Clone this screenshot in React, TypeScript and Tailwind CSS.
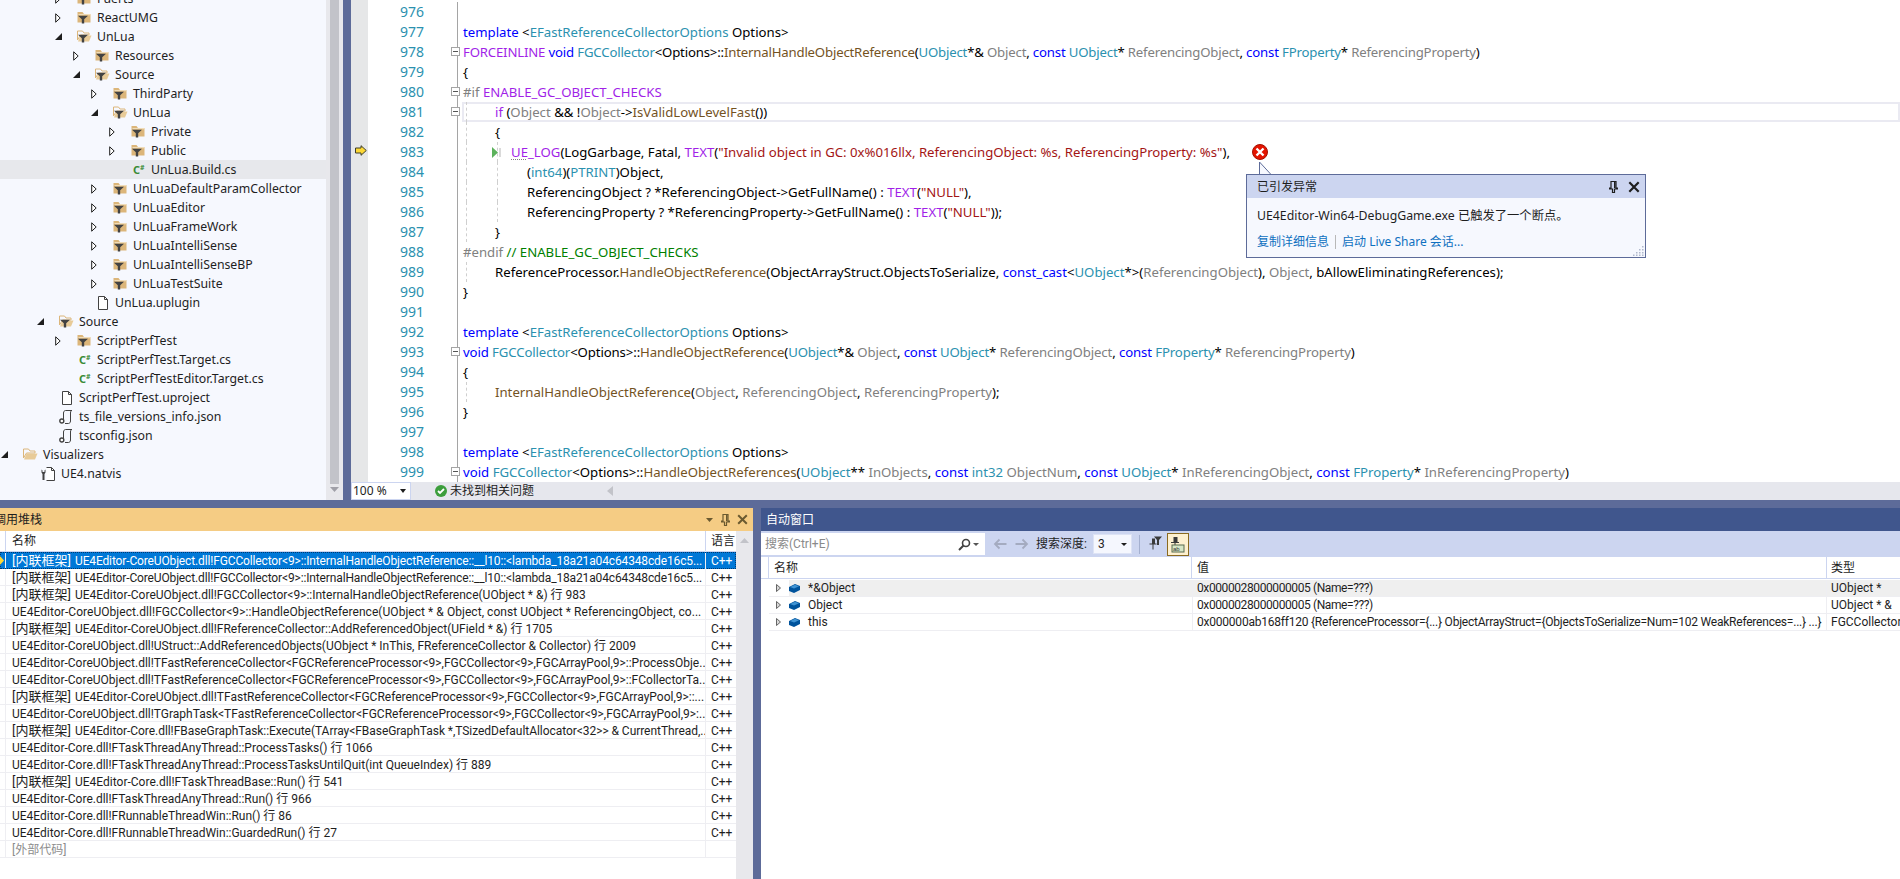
import { ReactNode } from "react";

const UI_FONT = "font-['Noto_Sans','Noto_Sans_CJK_SC',sans-serif]";
const LIST_FONT = "font-['Roboto','Noto_Sans_CJK_SC',sans-serif]";

// ---------- small icons ----------
const FolderClosed = () => (
  <svg width="14" height="13" viewBox="0 0 14 13">
    <path d="M0.5 1h5l1.5 2h6.5v8.5h-13z" fill="#dcb67a" />
    <path d="M1.5 3.2h12v1h-12z" fill="#f5e6c8" />
    <path d="M1 4.8h10l-3.8 3.4v4.3h-2.4v-4.3z" fill="#424242" />
  </svg>
);

const FolderOpen = ({ filter = true }: { filter?: boolean }) => (
  <svg width="15" height="13" viewBox="0 0 15 13">
    <path d="M0.5 1h5l1.5 2h5v2H3.5l-3 5z" fill="none" stroke="#dcb67a" />
    <path d="M3.5 5.5h11l-2.5 6h-11z" fill="#e8cb98" />
    {filter && <path d="M1 4.8h10l-3.8 3.4v4.3h-2.4v-4.3z" fill="#424242" />}
  </svg>
);

const FileIcon = () => (
  <svg className="ml-[2px]" width="12" height="14" viewBox="0 0 12 14">
    <path d="M1.5 0.5h6l3 3v10h-9z" fill="#fff" stroke="#424242" />
    <path d="M7.5 0.5v3h3" fill="none" stroke="#424242" />
  </svg>
);

const JsonIcon = () => (
  <svg width="14" height="14" viewBox="0 0 14 14">
    <path d="M4.5 10V3c0-1.5 1-2.5 2-2.5h6.500c-1 0-1.500 1-1.500 2.500v8c0 1.500-1 2.500-2 2.500H6" fill="none" stroke="#424242" />
    <circle cx="2.800" cy="11" r="2" fill="#fff" stroke="#424242" strokeWidth="1.400" />
  </svg>
);

const NatvisIcon = () => (
  <svg width="14" height="14" viewBox="0 0 14 14">
    <path d="M5.500 0.500h5l3 3v10H5.500" fill="#fff" stroke="#424242" />
    <path d="M10.500 0.500v3h3" fill="none" stroke="#424242" />
    <path d="M0.500 2.500v3l1 1.500v6h2V7l1-1.500v-3l-1 1v1.500h-2V3.500z" fill="#424242" />
  </svg>
);

const Collapsed = () => (
  <svg width="6" height="10" viewBox="0 0 6 10">
    <path d="M0.700 0.800l4.500 4.200-4.500 4.200z" fill="#fff" stroke="#1e1e1e" />
  </svg>
);

const Expanded = () => (
  <svg width="7" height="7" viewBox="0 0 7 7">
    <path d="M7 0v7H0z" fill="#1e1e1e" />
  </svg>
);

const CSharp = () => (
  <span className="ml-[2px] flex items-start w-[13px] font-bold leading-none text-[#388a34]">
    <span className="text-[11px]">C</span>
    <span className="text-[7px]">#</span>
  </span>
);

const Cube = () => (
  <svg width="11" height="9" viewBox="0 0 11 9">
    <path d="M0 3l6-3 5 2v4l-6 3-5-2z" fill="#00539c" />
    <path d="M1 3l5-2.300 4 1.600-5 2.200z" fill="#3f93d3" />
  </svg>
);

const SmallTri = () => (
  <svg width="5" height="8" viewBox="0 0 5 8">
    <path d="M0.500 0.500l4 3.500-4 3.500z" fill="#d8d8d8" stroke="#444" strokeWidth="0.800" />
  </svg>
);

const Pin = ({ color = "#1e1e1e" }: { color?: string }) => (
  <svg width="9" height="12" viewBox="0 0 9 12">
    <path d="M2 0.500h5v6.500h1.500v1h-3v3.500h-2V8h-3V7H2z" fill="none" stroke={color} strokeWidth="1.200" />
    <path d="M5 1v6h1.500V1z" fill={color} />
  </svg>
);

const Cross = ({ color = "#1e1e1e", size = 11 }: { color?: string; size?: number }) => (
  <svg width={size} height={size} viewBox="0 0 11 11">
    <path d="M1.200 1.200l8.600 8.600M9.800 1.200l-8.600 8.600" stroke={color} strokeWidth="2" />
  </svg>
);

const ExecArrow = () => (
  <svg width="12" height="11" viewBox="0 0 12 11">
    <path d="M0.500 3h5.500V0.700l5.300 4.800L6 10.300V8H0.500z" fill="#fdd835" stroke="#3f3f2a" />
  </svg>
);

// ---------- solution tree ----------
type Kind = "fc" | "fo" | "fr" | "cs" | "file" | "json" | "nat";
const tree: [number, string, Kind, "c" | "e" | ""][] = [
  [1, "Fuerts", "fc", "c"],
  [1, "ReactUMG", "fc", "c"],
  [1, "UnLua", "fo", "e"],
  [2, "Resources", "fc", "c"],
  [2, "Source", "fo", "e"],
  [3, "ThirdParty", "fc", "c"],
  [3, "UnLua", "fo", "e"],
  [4, "Private", "fc", "c"],
  [4, "Public", "fc", "c"],
  [4, "UnLua.Build.cs", "cs", ""],
  [3, "UnLuaDefaultParamCollector", "fc", "c"],
  [3, "UnLuaEditor", "fc", "c"],
  [3, "UnLuaFrameWork", "fc", "c"],
  [3, "UnLuaIntelliSense", "fc", "c"],
  [3, "UnLuaIntelliSenseBP", "fc", "c"],
  [3, "UnLuaTestSuite", "fc", "c"],
  [2, "UnLua.uplugin", "file", ""],
  [0, "Source", "fo", "e"],
  [1, "ScriptPerfTest", "fc", "c"],
  [1, "ScriptPerfTest.Target.cs", "cs", ""],
  [1, "ScriptPerfTestEditor.Target.cs", "cs", ""],
  [0, "ScriptPerfTest.uproject", "file", ""],
  [0, "ts_file_versions_info.json", "json", ""],
  [0, "tsconfig.json", "json", ""],
  [-1, "Visualizers", "fr", "e"],
  [-2, "UE4.natvis", "nat", ""],
];

const indentClass: Record<number, string> = {
  [-2]: "pl-[19px]",
  [-1]: "pl-[1px]",
  0: "pl-[37px]",
  1: "pl-[55px]",
  2: "pl-[73px]",
  3: "pl-[91px]",
  4: "pl-[109px]",
};

const kindIcon = (k: Kind) => {
  if (k === "fc") return <FolderClosed />;
  if (k === "fo") return <FolderOpen />;
  if (k === "fr") return <FolderOpen filter={false} />;
  if (k === "cs") return <CSharp />;
  if (k === "file") return <FileIcon />;
  if (k === "json") return <JsonIcon />;
  return <NatvisIcon />;
};

const SolutionTree = () => (
  <div className="flex w-[343px] h-full bg-[#f6f8fe]">
    <div className="w-[326px] -mt-[11px] overflow-hidden">
      {tree.map(([lvl, name, kind, exp], i) => (
        <div
          key={i}
          className={`flex items-center h-[19px] text-[12.3px] text-[#1e1e1e] ${indentClass[lvl]} ${
            i === 9 ? "bg-[#e7e8ec]" : ""
          }`}
        >
          <span className="w-[22px] flex-none flex items-center">
            {exp === "c" && <Collapsed />}
            {exp === "e" && <Expanded />}
          </span>
          <span className="w-[20px] flex-none flex items-center">{kindIcon(kind)}</span>
          <span className="whitespace-nowrap pt-[2px]">{name}</span>
        </div>
      ))}
    </div>
    <div className="w-[17px] bg-[#e8e8ec] flex flex-col items-center">
      <div className="w-[9px] h-[484px] bg-[#c2c3c9]" />
      <svg className="mt-[3px]" width="9" height="5" viewBox="0 0 9 5">
        <path d="M0 0h9L4.500 5z" fill="#a0a0a8" />
      </svg>
    </div>
  </div>
);

// ---------- code editor ----------
const color: Record<string, string> = {
  k: "text-[#0000ff]",
  t: "text-[#2b91af]",
  m: "text-[#a11fe8]",
  f: "text-[#74531f]",
  p: "text-[#808080]",
  s: "text-[#a31515]",
  c: "text-[#008000]",
  o: "text-[#000000]",
};

type Tok = [string, string];
const T = (s: string, k = "o"): Tok => [s, k];
const templ: Tok[] = [T("template", "k"), T(" <"), T("EFastReferenceCollectorOptions", "t"), T(" Options>")];
const refs: Tok[] = [
  T("UObject", "t"),
  T("*& "),
  T("Object", "p"),
  T(", "),
  T("const ", "k"),
  T("UObject", "t"),
  T("* "),
  T("ReferencingObject", "p"),
  T(", "),
  T("const ", "k"),
  T("FProperty", "t"),
  T("* "),
  T("ReferencingProperty", "p"),
  T(")"),
];

const L1 = "pl-[37px]";
const L2 = "pl-[53px]";
const L3 = "pl-[69px]";

const code: { n: number; ind?: string; toks: Tok[]; fold?: boolean; g1?: boolean; g2?: boolean; tight?: string }[] = [
  { n: 976, toks: [] },
  { n: 977, toks: templ },
  {
    n: 978,
    fold: true,
    tight: "tracking-[-0.18px]",
    toks: [
      T("FORCEINLINE ", "m"),
      T("void ", "k"),
      T("FGCCollector", "t"),
      T("<Options>::"),
      T("InternalHandleObjectReference", "f"),
      T("("),
      ...refs,
    ],
  },
  { n: 979, toks: [T("{")] },
  { n: 980, fold: true, toks: [T("#if ", "p"), T("ENABLE_GC_OBJECT_CHECKS", "m")] },
  {
    n: 981,
    fold: true,
    g1: true,
    ind: L1,
    toks: [
      T("if ", "m"),
      T("("),
      T("Object ", "p"),
      T("&& !"),
      T("Object", "p"),
      T("->"),
      T("IsValidLowLevelFast", "f"),
      T("())"),
    ],
  },
  { n: 982, g1: true, ind: L1, toks: [T("{")] },
  {
    n: 983,
    g1: true,
    g2: true,
    ind: L2,
    toks: [
      T("UE_LOG", "m"),
      T("(LogGarbage, Fatal, "),
      T("TEXT", "m"),
      T("("),
      T('"Invalid object in GC: 0x%016llx, ReferencingObject: %s, ReferencingProperty: %s"', "s"),
      T("),"),
    ],
  },
  {
    n: 984,
    g1: true,
    g2: true,
    ind: L3,
    toks: [T("("), T("int64", "t"), T(")("), T("PTRINT", "t"), T(")Object,")],
  },
  {
    n: 985,
    g1: true,
    g2: true,
    ind: L3,
    toks: [
      T("ReferencingObject ? *ReferencingObject->GetFullName() : "),
      T("TEXT", "m"),
      T("("),
      T('"NULL"', "s"),
      T("),"),
    ],
  },
  {
    n: 986,
    g1: true,
    g2: true,
    ind: L3,
    toks: [
      T("ReferencingProperty ? *ReferencingProperty->GetFullName() : "),
      T("TEXT", "m"),
      T("("),
      T('"NULL"', "s"),
      T("));"),
    ],
  },
  { n: 987, g1: true, ind: L1, toks: [T("}")] },
  { n: 988, toks: [T("#endif ", "p"), T("// ENABLE_GC_OBJECT_CHECKS", "c")] },
  {
    n: 989,
    g1: true,
    ind: L1,
    toks: [
      T("ReferenceProcessor."),
      T("HandleObjectReference", "f"),
      T("(ObjectArrayStruct.ObjectsToSerialize, "),
      T("const_cast", "k"),
      T("<"),
      T("UObject", "t"),
      T("*>("),
      T("ReferencingObject", "p"),
      T("), "),
      T("Object", "p"),
      T(", bAllowEliminatingReferences);"),
    ],
  },
  { n: 990, toks: [T("}")] },
  { n: 991, toks: [] },
  { n: 992, toks: templ },
  {
    n: 993,
    fold: true,
    tight: "tracking-[-0.12px]",
    toks: [
      T("void ", "k"),
      T("FGCCollector", "t"),
      T("<Options>::"),
      T("HandleObjectReference", "f"),
      T("("),
      ...refs,
    ],
  },
  { n: 994, toks: [T("{")] },
  {
    n: 995,
    g1: true,
    ind: L1,
    toks: [
      T("InternalHandleObjectReference", "f"),
      T("("),
      T("Object", "p"),
      T(", "),
      T("ReferencingObject", "p"),
      T(", "),
      T("ReferencingProperty", "p"),
      T(");"),
    ],
  },
  { n: 996, toks: [T("}")] },
  { n: 997, toks: [] },
  { n: 998, toks: templ },
  {
    n: 999,
    fold: true,
    toks: [
      T("void ", "k"),
      T("FGCCollector", "t"),
      T("<Options>::"),
      T("HandleObjectReferences", "f"),
      T("("),
      T("UObject", "t"),
      T("** "),
      T("InObjects", "p"),
      T(", "),
      T("const ", "k"),
      T("int32 ", "t"),
      T("ObjectNum", "p"),
      T(", "),
      T("const ", "k"),
      T("UObject", "t"),
      T("* "),
      T("InReferencingObject", "p"),
      T(", "),
      T("const ", "k"),
      T("FProperty", "t"),
      T("* "),
      T("InReferencingProperty", "p"),
      T(")"),
    ],
  },
];

const FoldBox = () => (
  <span className="absolute right-[-3px] top-[5px] w-[9px] h-[9px] border border-[#a5a5a5] bg-white flex items-center justify-center">
    <span className="w-[5px] h-px bg-[#555]" />
  </span>
);

const CodeRow = ({ row }: { row: (typeof code)[number] }) => (
  <div className="flex h-[20px] items-center">
    <span className="w-[56px] pb-px text-right text-[#2b91af] text-[14px] flex-none">{row.n}</span>
    <span className="relative w-[34px] h-full flex-none border-r border-[#a5a5a5]">{row.fold && <FoldBox />}</span>
    <div
      className={`relative flex-1 h-full flex items-center pt-[2px] whitespace-nowrap text-[13.2px] ${
        row.ind ?? "pl-[5px]"
      } ${row.tight ?? ""}`}
    >
      {row.n === 981 && <span className="absolute left-[4px] right-0 top-0 bottom-0 border-2 border-[#eaeaf2]" />}
      {row.g1 && <span className="absolute left-[8px] top-0 h-full border-l border-dashed border-[#cfcfcf]" />}
      {row.g2 && <span className="absolute left-[39px] top-0 h-full border-l border-dashed border-[#cfcfcf]" />}
      {row.n === 983 && (
        <>
          <svg className="absolute left-[34px] top-[5px]" width="9" height="11" viewBox="0 0 9 11">
            <path d="M0 0l6 5.500L0 11z" fill="#5cb25c" />
            <path d="M8 1v9" stroke="#b5b5b5" />
          </svg>
          <span className="absolute left-[53px] top-[17px] w-[15px] border-b border-dotted border-[#808080]" />
        </>
      )}
      {row.toks.map(([text, k], i) => (
        <span key={i} className={`relative whitespace-pre ${color[k]}`}>
          {text}
        </span>
      ))}
    </div>
  </div>
);

const ExceptionPopup = () => (
  <>
    <span className="absolute left-[884px] top-[144px] w-[16px] h-[16px] rounded-full bg-[#e41400] border border-[#a51000] flex items-center justify-center">
      <svg width="10" height="10" viewBox="0 0 10 10">
        <path d="M1.500 1.500l7 7M8.500 1.500l-7 7" stroke="#fff" strokeWidth="2.400" />
      </svg>
    </span>
    <svg className="absolute left-[891px] top-[161px]" width="14" height="14" viewBox="0 0 14 14">
      <path d="M0.500 14V1l12 13z" fill="#f6f8fe" stroke="#5d6b99" />
    </svg>
    <div className="absolute left-[878px] top-[174px] w-[400px] h-[84px] border border-[#5d6b99] bg-[#f6f8fe] text-[12px]">
      <div className="flex items-center h-[23px] pl-[10px] pr-[5px] bg-[#ccd5f0] text-[#1e1e1e]">
        <span className="flex-1">已引发异常</span>
        <span className="mr-[10px] flex items-center">
          <Pin />
        </span>
        <Cross size={12} />
      </div>
      <div className="pl-[10px] pt-[9px] h-[29px] text-[12.300px] text-[#1e1e1e] whitespace-nowrap">
        UE4Editor-Win64-DebugGame.exe 已触发了一个断点。
      </div>
      <div className="flex items-center pl-[10px] mt-[6px] text-[#0e70c0] whitespace-nowrap">
        <span>复制详细信息</span>
        <span className="w-px h-[14px] bg-[#b8b8b8] mx-[6px]" />
        <span>启动 Live Share 会话...</span>
      </div>
      <svg className="absolute right-px bottom-px" width="11" height="11" viewBox="0 0 11 11" fill="#b0b8cc">
        <rect x="9" y="1" width="1.500" height="1.500" />
        <rect x="6" y="4" width="1.500" height="1.500" />
        <rect x="9" y="4" width="1.500" height="1.500" />
        <rect x="3" y="7" width="1.500" height="1.500" />
        <rect x="6" y="7" width="1.500" height="1.500" />
        <rect x="9" y="7" width="1.500" height="1.500" />
        <rect x="0" y="9.500" width="1.500" height="1.500" />
        <rect x="3" y="9.500" width="1.500" height="1.500" />
        <rect x="6" y="9.500" width="1.500" height="1.500" />
        <rect x="9" y="9.500" width="1.500" height="1.500" />
      </svg>
    </div>
  </>
);

const Editor = () => (
  <div className="flex-1 flex flex-col min-w-0">
    <div className="flex-1 flex min-h-0">
      <div className="w-[17px] flex-none bg-[#e6e7e8] pt-[145px] pl-[4px]">
        <ExecArrow />
      </div>
      <div className="relative flex-1 bg-white pt-[2px] overflow-hidden font-['Noto_Sans','Noto_Sans_CJK_SC',sans-serif]">
        {code.map((row) => (
          <CodeRow key={row.n} row={row} />
        ))}
        <ExceptionPopup />
      </div>
    </div>
    <div className="flex items-center h-[18px] bg-[#e6e7ed] text-[12px] text-[#1e1e1e]">
      <div className="flex items-center justify-between w-[60px] h-full bg-white border border-[#ccd5f0] pl-[1px] pr-[4px]">
        <span>100 %</span>
        <svg width="6" height="4" viewBox="0 0 6 4">
          <path d="M0 0h6L3 4z" fill="#1e1e1e" />
        </svg>
      </div>
      <svg className="ml-[24px] mr-[3px]" width="12" height="12" viewBox="0 0 12 12">
        <circle cx="6" cy="6" r="6" fill="#3c9e3c" />
        <path d="M3 6l2 2 4-4" fill="none" stroke="#fff" strokeWidth="1.800" />
      </svg>
      <span>未找到相关问题</span>
      <svg className="ml-[73px]" width="6" height="10" viewBox="0 0 6 10">
        <path d="M6 0v10L0 5z" fill="#c2c3c9" />
      </svg>
    </div>
  </div>
);

// ---------- call stack ----------
// [inline frame?, text, letter spacing]
const stack: [boolean, string, string][] = [
  [true, "UE4Editor-CoreUObject.dll!FGCCollector<9>::InternalHandleObjectReference::__l10::<lambda_18a21a04c64348cde16c5...", "tracking-[-0.14px]"],
  [true, "UE4Editor-CoreUObject.dll!FGCCollector<9>::InternalHandleObjectReference::__l10::<lambda_18a21a04c64348cde16c5...", "tracking-[-0.14px]"],
  [true, "UE4Editor-CoreUObject.dll!FGCCollector<9>::InternalHandleObjectReference(UObject * &) 行 983", ""],
  [false, "UE4Editor-CoreUObject.dll!FGCCollector<9>::HandleObjectReference(UObject * & Object, const UObject * ReferencingObject, co...", "tracking-[0.05px]"],
  [true, "UE4Editor-CoreUObject.dll!FReferenceCollector::AddReferencedObject(UField * &) 行 1705", ""],
  [false, "UE4Editor-CoreUObject.dll!UStruct::AddReferencedObjects(UObject * InThis, FReferenceCollector & Collector) 行 2009", ""],
  [false, "UE4Editor-CoreUObject.dll!TFastReferenceCollector<FGCReferenceProcessor<9>,FGCCollector<9>,FGCArrayPool,9>::ProcessObje...", ""],
  [false, "UE4Editor-CoreUObject.dll!TFastReferenceCollector<FGCReferenceProcessor<9>,FGCCollector<9>,FGCArrayPool,9>::FCollectorTa...", ""],
  [true, "UE4Editor-CoreUObject.dll!TFastReferenceCollector<FGCReferenceProcessor<9>,FGCCollector<9>,FGCArrayPool,9>::...", ""],
  [false, "UE4Editor-CoreUObject.dll!TGraphTask<TFastReferenceCollector<FGCReferenceProcessor<9>,FGCCollector<9>,FGCArrayPool,9>:...", ""],
  [true, "UE4Editor-Core.dll!FBaseGraphTask::Execute(TArray<FBaseGraphTask *,TSizedDefaultAllocator<32>> & CurrentThread,...", "tracking-[-0.05px]"],
  [false, "UE4Editor-Core.dll!FTaskThreadAnyThread::ProcessTasks() 行 1066", ""],
  [false, "UE4Editor-Core.dll!FTaskThreadAnyThread::ProcessTasksUntilQuit(int QueueIndex) 行 889", ""],
  [true, "UE4Editor-Core.dll!FTaskThreadBase::Run() 行 541", ""],
  [false, "UE4Editor-Core.dll!FTaskThreadAnyThread::Run() 行 966", ""],
  [false, "UE4Editor-Core.dll!FRunnableThreadWin::Run() 行 86", ""],
  [false, "UE4Editor-Core.dll!FRunnableThreadWin::GuardedRun() 行 27", ""],
];

const CallStack = () => (
  <div className={`w-[753px] flex-none flex flex-col bg-white text-[12px] text-[#1e1e1e] ${LIST_FONT}`}>
    <div className="flex items-center h-[23px] bg-[#f5cc84] pr-[5px]">
      <span className="flex-1 -ml-[6px] text-[12px]">调用堆栈</span>
      <svg className="mr-[8px]" width="7" height="4" viewBox="0 0 7 4">
        <path d="M0 0h7L3.500 4z" fill="#6b5a30" />
      </svg>
      <span className="mr-[7px] flex">
        <Pin color="#6b5a30" />
      </span>
      <Cross color="#6b5a30" />
    </div>
    <div className="flex-1 flex min-h-0">
      <div className="w-[736px] flex-none overflow-hidden">
        <div className="flex h-[21px] items-center border-b border-[#ccd5f0] text-[12px]">
          <span className="w-[6px] h-full border-r border-[#ccd5f0]" />
          <span className="w-[700px] h-full flex items-center pl-[6px] border-r border-[#ccd5f0]">名称</span>
          <span className="pl-[5px] whitespace-nowrap">语言</span>
        </div>
        {stack.map(([inl, s, track], i) => (
          <div
            key={i}
            className={`relative flex h-[17px] items-center border-b ${
              i === 0
                ? "bg-[#0078d7] text-white border-[#0078d7] outline outline-dotted outline-[#003a70] -outline-offset-1"
                : "border-[#eeeef2]"
            }`}
          >
            <span className="w-[6px] h-full flex-none border-r border-[#eeeef2]" />
            <span className={`w-[700px] flex-none pl-[6px] pt-px whitespace-nowrap overflow-hidden border-r border-[#eeeef2] ${track}`}>
              {inl && <span className="inline-block w-[63px] text-[13px] leading-none tracking-normal">[内联框架]</span>}
              {s}
            </span>
            <span className="pl-[5px] pt-px">C++</span>
            {i === 0 && (
              <svg className="absolute left-0 top-[4px]" width="4" height="9" viewBox="0 0 4 9">
                <path d="M0 0l4 4.500L0 9z" fill="#fdd835" />
              </svg>
            )}
          </div>
        ))}
        <div className="flex h-[17px] items-center border-b border-[#eeeef2] text-[#8c8c8c]">
          <span className="w-[6px] h-full flex-none border-r border-[#eeeef2]" />
          <span className="w-[700px] h-full flex-none pl-[6px] border-r border-[#eeeef2]">[外部代码]</span>
        </div>
      </div>
      <div className="flex-1 bg-[#e8e8ec] flex justify-center pt-[7px]">
        <svg width="9" height="5" viewBox="0 0 9 5">
          <path d="M0 5h9L4.500 0z" fill="#c2c3c9" />
        </svg>
      </div>
    </div>
  </div>
);

// ---------- autos ----------
const autos: [string, string, string, string][] = [
  ["*&Object", "0x0000028000000005 (Name=???)", "UObject *", "tracking-[-0.4px]"],
  ["Object", "0x0000028000000005 (Name=???)", "UObject * &", "tracking-[-0.4px]"],
  [
    "this",
    "0x000000ab168ff120 {ReferenceProcessor={...} ObjectArrayStruct={ObjectsToSerialize=Num=102 WeakReferences=...} ...}",
    "FGCCollector<9>",
    "tracking-[-0.22px]",
  ],
];

const AutosHead = ({ className, children }: { className: string; children: ReactNode }) => (
  <span className={`h-full flex items-center border-r border-[#ccd5f0] ${className}`}>{children}</span>
);

const Autos = () => (
  <div className={`flex-1 min-w-0 flex flex-col bg-white text-[12px] text-[#1e1e1e] overflow-hidden ${LIST_FONT}`}>
    <div className="flex items-center h-[23px] bg-[#40568d] text-white pl-[5px]">自动窗口</div>
    <div className="flex items-center h-[26px] bg-[#ccd5f0]">
      <div className="flex items-center w-[224px] h-[22px] bg-white pl-[4px] pr-[6px] text-[#8a8a8a]">
        <span className="flex-1">搜索(Ctrl+E)</span>
        <svg width="13" height="13" viewBox="0 0 13 13">
          <circle cx="8" cy="5" r="3.500" fill="none" stroke="#424242" strokeWidth="1.600" />
          <path d="M5.500 7.500L1 12" stroke="#424242" strokeWidth="2" />
        </svg>
        <svg className="ml-[2px]" width="6" height="3" viewBox="0 0 6 3">
          <path d="M0 0h6L3 3z" fill="#555" />
        </svg>
      </div>
      <svg className="ml-[8px]" width="14" height="12" viewBox="0 0 14 12">
        <path d="M13.500 6H2M6.500 1.500L2 6l4.500 4.500" fill="none" stroke="#a4abc0" strokeWidth="1.800" />
      </svg>
      <svg className="ml-[8px]" width="14" height="12" viewBox="0 0 14 12">
        <path d="M0.500 6H12M7.500 1.500L12 6l-4.500 4.500" fill="none" stroke="#a4abc0" strokeWidth="1.800" />
      </svg>
      <span className="ml-[7px]">搜索深度:</span>
      <div className="ml-[6px] flex items-center justify-between w-[39px] h-[20px] bg-[#f5f7fe] border border-[#dde3f5] px-[4px]">
        <span>3</span>
        <svg width="6" height="3" viewBox="0 0 6 3">
          <path d="M0 0h6L3 3z" fill="#1e1e1e" />
        </svg>
      </div>
      <span className="ml-[7px] w-px h-[19px] bg-[#a4b0d0]" />
      <svg className="ml-[8px]" width="14" height="16" viewBox="0 0 14 16">
        <path d="M4 2.500h3v5h1.500v1h-3v5h-1v-5h-3v-1H4z" fill="#3a3a3a" />
        <path d="M6 0.500h8l-3 3.500v5H9V4z" fill="#3a3a3a" />
      </svg>
      <span className="ml-[5px] flex items-center justify-center w-[22px] h-[23px] bg-[#fdf0cf] border border-[#8a6a20]">
        <svg width="15" height="17" viewBox="0 0 15 17">
          <path d="M3.500 1h4v5H9v1H5.500v4h-1V7H1V6h2.500z" fill="#3a3a3a" />
          <rect x="2" y="9" width="12" height="7" fill="#d6e6c6" stroke="#5a6a50" />
          <text x="3" y="15" fontSize="6" fill="#333" fontFamily="'Liberation Sans',sans-serif">
            ab
          </text>
        </svg>
      </span>
    </div>
    <div className="flex h-[22px] items-center border-b border-[#ccd5f0]">
      <span className="w-[8px] h-full border-r border-[#ccd5f0]" />
      <AutosHead className="w-[423px] pl-[5px]">名称</AutosHead>
      <AutosHead className="w-[635px] pl-[5px]">值</AutosHead>
      <span className="pl-[4px] whitespace-nowrap">类型</span>
    </div>
    {autos.map(([n, v, t, track], i) => (
      <div key={n} className={`flex h-[17px] items-center ${i === 0 ? "mt-px" : ""}`}>
        <span className="w-[8px] h-full flex-none" />
        <span className="w-[20px] h-full pl-[7px] flex items-center flex-none border-b border-[#eeeef2]">
          <SmallTri />
        </span>
        <div
          className={`w-[403px] flex-none h-full flex items-center border-b border-[#eeeef2] ${
            i === 0 ? "bg-[#efefef]" : ""
          }`}
        >
          <span className="w-[19px] flex items-center flex-none">
            <Cube />
          </span>
          <span className="whitespace-nowrap">{n}</span>
        </div>
        <span
          className={`w-[635px] flex-none h-full flex items-center pl-[4px] whitespace-nowrap overflow-hidden border-x border-b border-[#eeeef2] ${track} ${
            i === 0 ? "bg-[#efefef]" : ""
          }`}
        >
          {v}
        </span>
        <span
          className={`flex-1 h-full flex items-center pl-[4px] whitespace-nowrap border-b border-[#eeeef2] ${
            i === 0 ? "bg-[#efefef]" : ""
          }`}
        >
          {t}
        </span>
      </div>
    ))}
  </div>
);

export default function App() {
  return (
    <div className={`w-[1900px] h-[879px] flex flex-col bg-[#5d6b99] overflow-hidden ${UI_FONT}`}>
      <div className="h-[500px] flex">
        <SolutionTree />
        <div className="w-[8px] flex-none" />
        <Editor />
      </div>
      <div className="flex-1 mt-[8px] flex min-h-0">
        <CallStack />
        <div className="w-[8px] flex-none" />
        <Autos />
      </div>
    </div>
  );
}
